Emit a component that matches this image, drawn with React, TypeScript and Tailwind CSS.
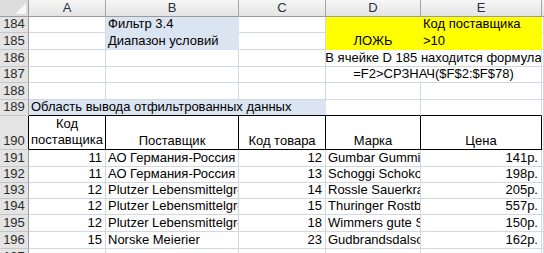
import React from 'react';

type DataRow = { n: number; code: string; supplier: string; item: string; brand: string; price: string };

const dataRows: DataRow[] = [
  { n: 191, code: '11', supplier: 'АО Германия-Россия', item: '12', brand: 'Gumbar Gummibarchen', price: '141р.' },
  { n: 192, code: '11', supplier: 'АО Германия-Россия', item: '13', brand: 'Schoggi Schokolade', price: '198р.' },
  { n: 193, code: '12', supplier: 'Plutzer Lebensmittelgrossmarkte AG', item: '14', brand: 'Rossle Sauerkraut', price: '205р.' },
  { n: 194, code: '12', supplier: 'Plutzer Lebensmittelgrossmarkte AG', item: '15', brand: 'Thuringer Rostbratwurst', price: '557р.' },
  { n: 195, code: '12', supplier: 'Plutzer Lebensmittelgrossmarkte AG', item: '18', brand: 'Wimmers gute Semmelknodel', price: '150р.' },
  { n: 196, code: '15', supplier: 'Norske Meierier', item: '23', brand: 'Gudbrandsdalsost', price: '162р.' },
];

const dataHeights = ['h-[17px]', 'h-[16px]', 'h-[16px]', 'h-[16px]', 'h-[17px]', 'h-[17px]'];

const grid = 'border-r border-b border-[#d0d7e5]';
const cellText = 'flex items-end overflow-hidden whitespace-nowrap leading-[15px] pb-[1px]';

function RowHead({ n, className = '' }: { n?: number; className?: string }) {
  return (
    <div
      className={`w-[29px] shrink-0 flex items-end justify-center pb-[1px] leading-[15px] bg-[#e4e4e4] border-r border-r-[#9c9c9c] border-b border-b-[#c6c6c6] text-[#2b2b2b] ${className}`}
    >
      {n}
    </div>
  );
}

function ColHead({ label, w }: { label: string; w: string }) {
  return (
    <div
      className={`${w} shrink-0 flex items-center justify-center bg-gradient-to-b from-[#f6f6f6] to-[#e4e4e4] border-r border-[#a6a6a6] border-b border-b-[#9c9c9c] text-[#27313e] text-[13px]`}
    >
      {label}
    </div>
  );
}

export default function App() {
  return (
    <div className="w-[544px] h-[253px] overflow-hidden bg-white text-black text-[13px] font-['Liberation_Sans',Arial,sans-serif]">
      {/* column letters */}
      <div className="flex h-[17px]">
        <div className="w-[29px] shrink-0 relative bg-[#dcdcdc] border-r border-b border-[#9c9c9c]">
          <svg className="absolute right-[2px] bottom-[2px]" width="11" height="11" viewBox="0 0 11 11">
            <polygon points="11,0 11,11 0,11" fill="#f8f8f8" />
          </svg>
        </div>
        <ColHead label="A" w="w-[77px]" />
        <ColHead label="B" w="w-[133px]" />
        <ColHead label="C" w="w-[87px]" />
        <ColHead label="D" w="w-[95px]" />
        <ColHead label="E" w="w-[121px]" />
        <div className="flex-1 bg-gradient-to-b from-[#f6f6f6] to-[#e4e4e4] border-b border-[#9c9c9c]" />
      </div>

      {/* 184 */}
      <div className="flex h-[16px]">
        <RowHead n={184} />
        <div className={`w-[77px] shrink-0 ${grid}`} />
        <div className={`w-[133px] shrink-0 bg-[#dbe5f1] border-r border-b border-[#dbe5f1] pl-[2px] ${cellText}`}>Фильтр 3.4</div>
        <div className={`w-[87px] shrink-0 ${grid}`} />
        <div className="w-[95px] shrink-0 bg-[#ffff00] border-r border-b border-[#ffff00]" />
        <div className={`w-[121px] shrink-0 bg-[#ffff00] border-r border-b border-[#ffff00] pl-[2px] ${cellText}`}>Код поставщика</div>
        <div className={`flex-1 ${grid}`} />
      </div>

      {/* 185 */}
      <div className="flex h-[17px]">
        <RowHead n={185} />
        <div className={`w-[77px] shrink-0 ${grid}`} />
        <div className={`w-[133px] shrink-0 bg-[#dbe5f1] border-r border-b border-[#dbe5f1] pl-[2px] ${cellText}`}>Диапазон условий</div>
        <div className={`w-[87px] shrink-0 ${grid}`} />
        <div className={`w-[95px] shrink-0 bg-[#ffff00] border-r border-b border-[#ffff00] justify-center ${cellText}`}>ЛОЖЬ</div>
        <div className={`w-[121px] shrink-0 bg-[#ffff00] border-r border-b border-[#ffff00] pl-[2px] ${cellText}`}>&gt;10</div>
        <div className={`flex-1 ${grid}`} />
      </div>

      {/* 186 */}
      <div className="flex h-[17px]">
        <RowHead n={186} />
        <div className={`w-[77px] shrink-0 ${grid}`} />
        <div className={`w-[133px] shrink-0 ${grid}`} />
        <div className={`w-[87px] shrink-0 ${grid}`} />
        <div className={`w-[216px] shrink-0 justify-center ${grid} ${cellText}`}>В ячейке D 185 находится формула</div>
        <div className={`flex-1 ${grid}`} />
      </div>

      {/* 187 */}
      <div className="flex h-[16px]">
        <RowHead n={187} />
        <div className={`w-[77px] shrink-0 ${grid}`} />
        <div className={`w-[133px] shrink-0 ${grid}`} />
        <div className={`w-[87px] shrink-0 ${grid}`} />
        <div className={`w-[216px] shrink-0 justify-center ${grid} ${cellText}`}>=F2&gt;СРЗНАЧ($F$2:$F$78)</div>
        <div className={`flex-1 ${grid}`} />
      </div>

      {/* 188 */}
      <div className="flex h-[17px]">
        <RowHead n={188} />
        <div className={`w-[77px] shrink-0 ${grid}`} />
        <div className={`w-[133px] shrink-0 ${grid}`} />
        <div className={`w-[87px] shrink-0 ${grid}`} />
        <div className={`w-[95px] shrink-0 ${grid}`} />
        <div className={`w-[121px] shrink-0 ${grid}`} />
        <div className={`flex-1 ${grid}`} />
      </div>

      {/* 189 */}
      <div className="flex h-[16px]">
        <RowHead n={189} />
        <div className={`w-[297px] shrink-0 bg-[#dbe5f1] border-b border-black pl-[2px] ${cellText}`}>
          Область вывода отфильтрованных данных
        </div>
        <div className="w-[95px] shrink-0 border-r border-r-[#d0d7e5] border-b border-b-black" />
        <div className="w-[121px] shrink-0 border-r border-r-[#d0d7e5] border-b border-b-black" />
        <div className={`flex-1 ${grid}`} />
      </div>

      {/* 190: table header */}
      <div className="flex h-[34px]">
        <RowHead n={190} className="!border-r-black" />
        <div className="w-[77px] shrink-0 flex flex-col items-center justify-end pb-[1px] leading-[16px] border-r border-b border-black">
          <span>Код</span>
          <span>поставщика</span>
        </div>
        <div className={`w-[133px] shrink-0 justify-center border-r border-b border-black ${cellText}`}>Поставщик</div>
        <div className={`w-[87px] shrink-0 justify-center border-r border-b border-black ${cellText}`}>Код товара</div>
        <div className={`w-[95px] shrink-0 justify-center border-r border-b border-black ${cellText}`}>Марка</div>
        <div className={`w-[121px] shrink-0 justify-center border-r border-b border-black ${cellText}`}>Цена</div>
        <div className={`flex-1 ${grid}`} />
      </div>

      {dataRows.map((r, i) => (
        <div key={r.n} className={`flex ${dataHeights[i]}`}>
          <RowHead n={r.n} />
          <div className={`w-[77px] shrink-0 justify-end pr-[3px] ${grid} ${cellText}`}>{r.code}</div>
          <div className={`w-[133px] shrink-0 pl-[2px] ${grid} ${cellText}`}>{r.supplier}</div>
          <div className={`w-[87px] shrink-0 justify-end pr-[3px] ${grid} ${cellText}`}>{r.item}</div>
          <div className={`w-[95px] shrink-0 pl-[2px] ${grid} ${cellText}`}>{r.brand}</div>
          <div className={`w-[121px] shrink-0 justify-end pr-[3px] ${grid} ${cellText}`}>{r.price}</div>
          <div className={`flex-1 ${grid}`} />
        </div>
      ))}

      {/* 197 */}
      <div className="flex h-[17px]">
        <RowHead n={197} />
        <div className={`w-[77px] shrink-0 ${grid}`} />
        <div className={`w-[133px] shrink-0 ${grid}`} />
        <div className={`w-[87px] shrink-0 ${grid}`} />
        <div className={`w-[95px] shrink-0 ${grid}`} />
        <div className={`w-[121px] shrink-0 ${grid}`} />
        <div className={`flex-1 ${grid}`} />
      </div>
    </div>
  );
}
